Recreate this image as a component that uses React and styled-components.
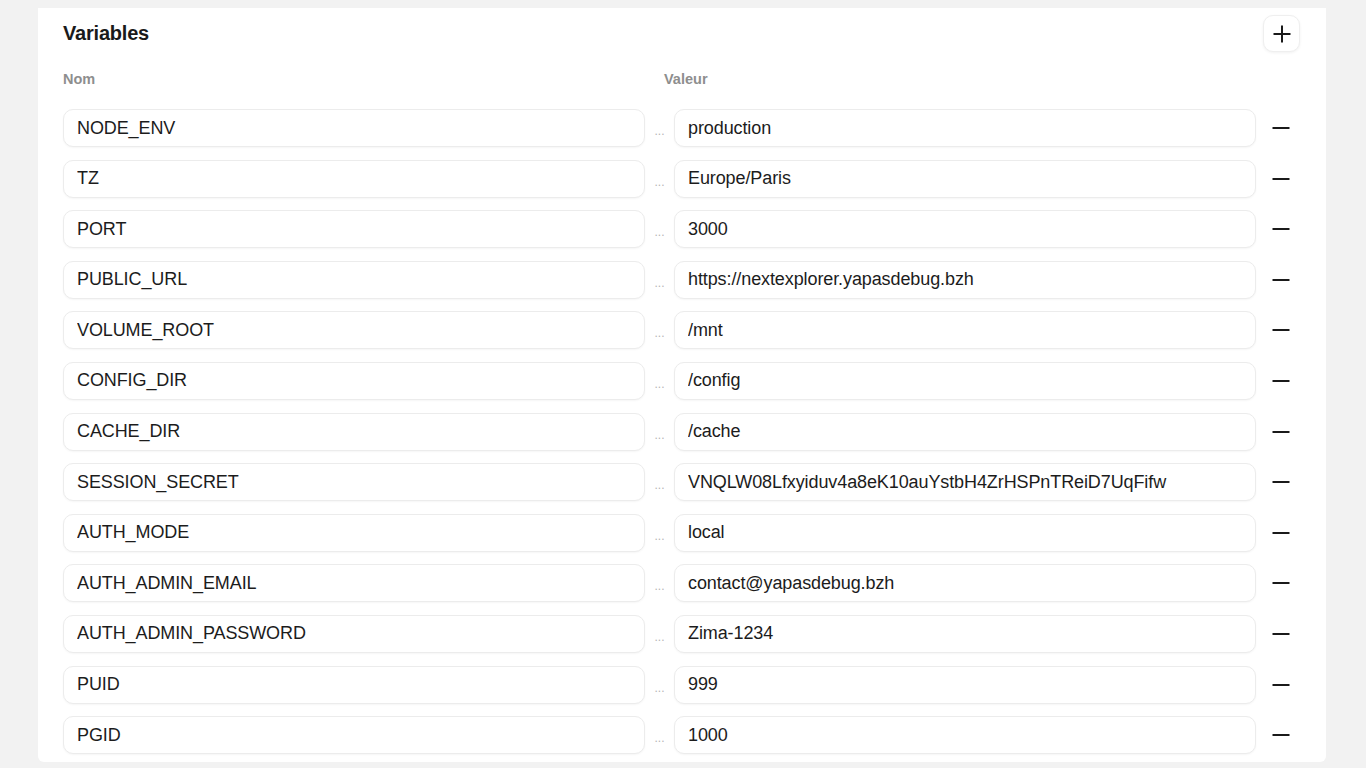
import React, { useState } from "react";
import styled, { createGlobalStyle } from "styled-components";

const GlobalStyle = createGlobalStyle`
  html, body {
    margin: 0;
    padding: 0;
    background: #f2f2f2;
    font-family: "Liberation Sans", Arial, sans-serif;
    color: #1c1c1c;
  }
  * { box-sizing: border-box; }
`;

const Panel = styled.section`
  margin: 8px 40px 0 38px;
  background: #ffffff;
  border-radius: 0 0 6px 6px;
  padding: 7px 20px 8px 25px;
`;

const Header = styled.div`
  display: flex;
  align-items: center;
  justify-content: space-between;
  height: 37px;
  padding-right: 6px;
`;

const Title = styled.h2`
  margin: 0;
  font-size: 20px;
  font-weight: 700;
  letter-spacing: -0.2px;
  color: #1a1a1a;
`;

const IconButton = styled.button`
  width: 37px;
  height: 37px;
  border-radius: 10px;
  border: 1px solid #efefef;
  background: #fff;
  box-shadow: 0 1px 3px rgba(0, 0, 0, 0.06);
  display: flex;
  align-items: center;
  justify-content: center;
  padding: 0;
  cursor: pointer;
`;

const Grid = styled.div`
  display: grid;
  grid-template-columns: 1fr 29px 1fr 50px;
  align-items: center;
`;

const Labels = styled(Grid)`
  margin-top: 19px;
  height: 16px;
`;

const Label = styled.span`
  font-size: 14.5px;
  font-weight: 700;
  color: #8e8e8e;
  margin-left: ${(p) => p.$shift || 0}px;
  grid-column: ${(p) => p.$col};
`;

const Rows = styled.div`
  display: flex;
  flex-direction: column;
  gap: 12.6px;
  margin-top: 22px;
`;

const Field = styled.input`
  height: 38px;
  width: 100%;
  border: 1px solid #ececec;
  border-radius: 10px;
  background: #fff;
  box-shadow: 0 1px 2px rgba(0, 0, 0, 0.04);
  padding: 0 13px;
  font-family: "Liberation Sans", Arial, sans-serif;
  font-size: 18px;
  color: #1c1c1c;
  outline: none;
  letter-spacing: -0.1px;
`;

const Dots = styled.span`
  text-align: center;
  font-size: 12px;
  line-height: 12px;
  color: #b5b5b5;
  padding-top: 6px;
`;

const RemoveButton = styled.button`
  border: none;
  background: none;
  padding: 0;
  height: 38px;
  display: flex;
  align-items: center;
  justify-content: center;
  cursor: pointer;
`;

const PlusIcon = () => (
  <svg width="20" height="20" viewBox="0 0 20 20">
    <path d="M10 1.5v17M1.5 10h17" stroke="#1a1a1a" strokeWidth="2" />
  </svg>
);

const MinusIcon = () => (
  <svg width="18" height="4" viewBox="0 0 18 4">
    <path d="M0.5 2h17" stroke="#1a1a1a" strokeWidth="2" />
  </svg>
);

const initial = [
  ["NODE_ENV", "production"],
  ["TZ", "Europe/Paris"],
  ["PORT", "3000"],
  ["PUBLIC_URL", "https://nextexplorer.yapasdebug.bzh"],
  ["VOLUME_ROOT", "/mnt"],
  ["CONFIG_DIR", "/config"],
  ["CACHE_DIR", "/cache"],
  ["SESSION_SECRET", "VNQLW08Lfxyiduv4a8eK10auYstbH4ZrHSPnTReiD7UqFifw"],
  ["AUTH_MODE", "local"],
  ["AUTH_ADMIN_EMAIL", "contact@yapasdebug.bzh"],
  ["AUTH_ADMIN_PASSWORD", "Zima-1234"],
  ["PUID", "999"],
  ["PGID", "1000"],
];

const App = () => {
  const [vars, setVars] = useState(initial);

  const update = (i, j, v) =>
    setVars((prev) =>
      prev.map((row, k) => (k === i ? (j === 0 ? [v, row[1]] : [row[0], v]) : row))
    );

  return (
    <>
      <GlobalStyle />
      <Panel>
        <Header>
          <Title>Variables</Title>
          <IconButton onClick={() => setVars([...vars, ["", ""]])}>
            <PlusIcon />
          </IconButton>
        </Header>
        <Labels>
          <Label $col={1}>Nom</Label>
          <Label $col={3} $shift={-10}>
            Valeur
          </Label>
        </Labels>
        <Rows>
          {vars.map(([name, value], i) => (
            <Grid key={i}>
              <Field value={name} onChange={(e) => update(i, 0, e.target.value)} />
              <Dots>...</Dots>
              <Field value={value} onChange={(e) => update(i, 1, e.target.value)} />
              <RemoveButton
                onClick={() => setVars(vars.filter((_, k) => k !== i))}
              >
                <MinusIcon />
              </RemoveButton>
            </Grid>
          ))}
        </Rows>
      </Panel>
    </>
  );
};

export default App;
